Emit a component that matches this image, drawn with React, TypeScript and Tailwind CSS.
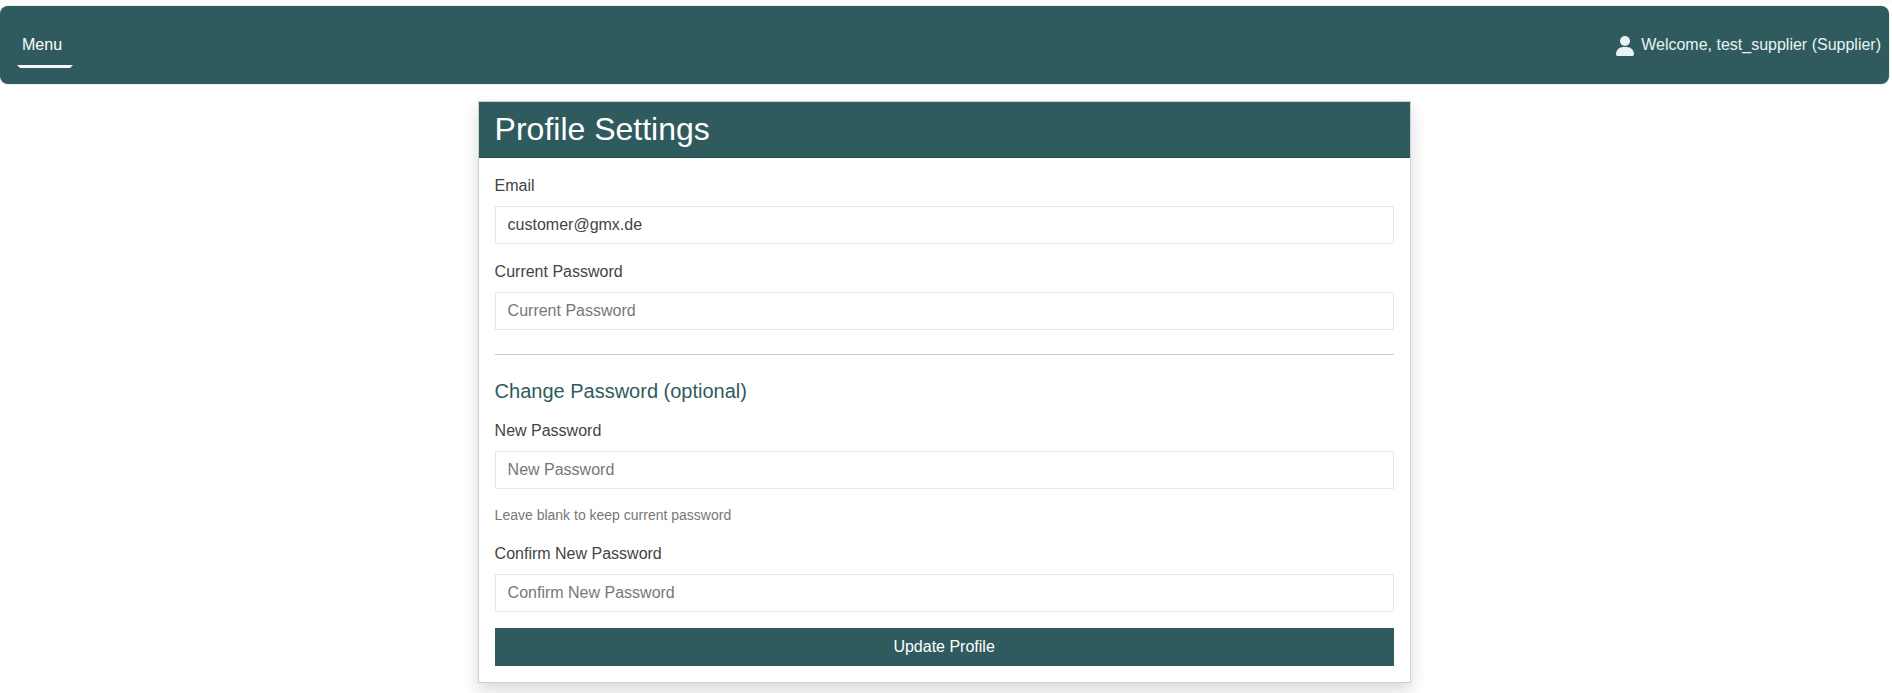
import React from "react";

function Field({ label, type = "password", value }: { label: string; type?: string; value?: string }) {
  return (
    <label className="block">
      <span className="mb-2 block leading-6">{label}</span>
      <input
        type={type}
        defaultValue={value}
        placeholder={label}
        className="block h-[38px] w-full border border-[#e9e9e9] bg-white px-3 py-1.5 text-base leading-6 text-[#444] placeholder:text-[#777] placeholder:opacity-100 outline-none"
      />
    </label>
  );
}

export default function App() {
  return (
    <div className="h-[693px] overflow-hidden bg-linear-to-b from-[#fafafa] from-0% to-white to-[6px] pt-1.5 font-['Liberation_Sans',Arial,sans-serif] text-base text-[#444]">
      <nav className="flex h-[78px] w-[1889px] items-center justify-between rounded-lg bg-[#2f5b5e] pr-2 pl-[17px] text-white shadow-[0_0_2px_rgba(0,0,0,0.2)]">
        <a className="flex h-[46px] w-[56px] flex-col justify-between">
          <span className="pt-[11px] pl-[5px] leading-6">Menu</span>
          <span className="h-[3px] w-full bg-[#f5f5fc] [clip-path:polygon(0_0,100%_0,calc(100%-3px)_100%,3px_100%)]" />
        </a>
        <div className="flex items-center text-[#e8f3f4]">
          <svg viewBox="0 0 18 20" className="mt-[2px] mr-[7px] h-5 w-[18px]" fill="currentColor">
            <circle cx="9" cy="5" r="5" />
            <path d="M0 18.3C0 14.3 3.2 11.1 7.2 11.1h3.6c4 0 7.2 3.2 7.2 7.2 0 .9-.7 1.7-1.6 1.7H1.6C.7 20 0 19.2 0 18.3z" />
          </svg>
          <span>Welcome, test_supplier (Supplier)</span>
        </div>
      </nav>
      <main className="mt-[17px] ml-[477.6px] w-[933px] border border-[#cfcfcf] bg-white shadow-[0_8px_16px_rgba(0,0,0,0.15)]">
        <h1 className="h-14 border-b border-[#244b4e] bg-[#2f5b5e] px-4 py-2 text-[32px] leading-[38.4px] text-white">
          Profile Settings
        </h1>
        <form className="flex flex-col gap-4 p-4">
          <Field label="Email" type="text" value="customer@gmx.de" />
          <Field label="Current Password" />
          <hr className="my-2 border-[#cbcbcb]" />
          <h2 className="text-xl leading-6 text-[#2f5b5e]">Change Password (optional)</h2>
          <Field label="New Password" />
          <small className="text-sm leading-[21px] text-[#777]">Leave blank to keep current password</small>
          <Field label="Confirm New Password" />
          <button type="button" className="h-[38px] bg-[#2f5b5e] leading-6 text-white">Update Profile</button>
        </form>
      </main>
    </div>
  );
}
